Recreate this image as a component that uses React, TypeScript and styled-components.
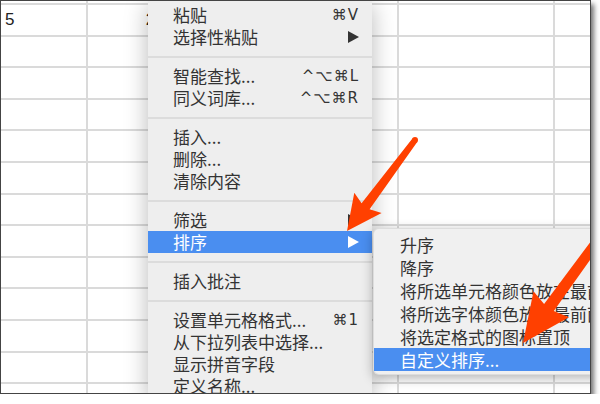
import React from "react";
import styled, { createGlobalStyle } from "styled-components";

const GlobalStyle = createGlobalStyle`
  html, body {
    margin: 0;
    padding: 0;
    background: #ffffff;
  }
  body {
    font-family: "Noto Sans CJK SC", "DejaVu Sans", sans-serif;
  }
`;

const Frame = styled.div`
  position: relative;
  box-sizing: border-box;
  width: 591px;
  height: 394px;
  border: 1px solid #444;
  overflow: hidden;
  box-shadow: 3px 4px 5px rgba(0, 0, 0, 0.55);
  background: #fff;
`;

const Sheet = styled.div`
  display: grid;
  grid-template-columns: 85px 153.5px 153.5px 153.5px 1fr;
  grid-template-rows: 2px;
  grid-auto-rows: 29.6px;
  gap: 2px;
  height: 100%;
  background: #dadada;
  overflow: hidden;
`;

const Cell = styled.div<{ $align?: "left" | "center" }>`
  background: #fff;
  display: flex;
  align-items: center;
  justify-content: ${(p) => (p.$align === "center" ? "center" : "flex-start")};
  padding-left: ${(p) => (p.$align === "center" ? "0" : "4px")};
  font-family: "Liberation Sans", Arial, sans-serif;
  font-size: 17px;
  line-height: 20px;
  color: #222;
  overflow: hidden;
  white-space: nowrap;
`;

const Menu = styled.div`
  position: absolute;
  top: 0;
  left: 147px;
  width: 224px;
  padding: 3px 0;
  background: #eeeeee;
  box-shadow: 0 4px 22px rgba(0, 0, 0, 0.28);
`;

const Item = styled.div<{ $active?: boolean; $pad?: number; $height?: number }>`
  display: flex;
  align-items: center;
  justify-content: space-between;
  height: ${(p) => p.$height ?? 22}px;
  padding: 0 13px 0 ${(p) => p.$pad ?? 25}px;
  font-size: 17px;
  line-height: 20px;
  color: ${(p) => (p.$active ? "#fff" : "#333")};
  background: ${(p) => (p.$active ? "#4a8ef0" : "transparent")};
  white-space: nowrap;
`;

const Shortcut = styled.span`
  font-family: "DejaVu Sans", sans-serif;
  font-size: 15px;
  letter-spacing: 1px;
`;

const Separator = styled.div`
  height: 17px;
  display: flex;
  align-items: center;
  &::after {
    content: "";
    flex: 1;
    height: 2px;
    background: #dcdcdc;
  }
`;

const SubMenu = styled.div`
  position: absolute;
  top: 227px;
  left: 372px;
  width: 260px;
  padding: 4px 0 3px;
  background: #f0f0f0;
  border: 1px solid rgba(0, 0, 0, 0.08);
  border-radius: 6px;
  box-shadow: 0 3px 12px rgba(0, 0, 0, 0.3);
`;

const Overlay = styled.svg`
  position: absolute;
  inset: 0;
  pointer-events: none;
`;

const Caret = () => (
  <svg width="11" height="12" viewBox="0 0 11 12">
    <polygon points="0,0 11,6 0,12" fill="currentColor" />
  </svg>
);

type P = [number, number];

function arrowPath(tail: P, tip: P, headLen: number, headHalf: number, neckHalf: number, tailHalf: number) {
  const dx = tip[0] - tail[0];
  const dy = tip[1] - tail[1];
  const len = Math.hypot(dx, dy);
  const d: P = [dx / len, dy / len];
  const n: P = [-d[1], d[0]];
  const base: P = [tip[0] - d[0] * headLen, tip[1] - d[1] * headLen];
  const back: P = [base[0] - d[0] * 4, base[1] - d[1] * 4];
  const pt = (p: P, k: number, m = n) => `${(p[0] + m[0] * k).toFixed(1)},${(p[1] + m[1] * k).toFixed(1)}`;
  return [
    pt(tail, tailHalf),
    pt(base, neckHalf),
    pt(back, headHalf),
    `${tip[0]},${tip[1]}`,
    pt(back, -headHalf),
    pt(base, -neckHalf),
    pt(tail, -tailHalf),
  ].join(" ");
}

type Row = { label: string; key?: string; sub?: boolean; active?: boolean } | "sep";

const menuRows: Row[] = [
  { label: "粘贴", key: "⌘V" },
  { label: "选择性粘贴", sub: true },
  "sep",
  { label: "智能查找...", key: "^⌥⌘L" },
  { label: "同义词库...", key: "^⌥⌘R" },
  "sep",
  { label: "插入..." },
  { label: "删除..." },
  { label: "清除内容" },
  "sep",
  { label: "筛选", sub: true },
  { label: "排序", sub: true, active: true },
  "sep",
  { label: "插入批注" },
  "sep",
  { label: "设置单元格格式...", key: "⌘1" },
  { label: "从下拉列表中选择..." },
  { label: "显示拼音字段" },
  { label: "定义名称..." },
];

const sortRows = [
  "升序",
  "降序",
  "将所选单元格颜色放在最前面",
  "将所选字体颜色放在最前面",
  "将选定格式的图标置顶",
  "自定义排序...",
];

const cellText: Record<string, { text: string; align?: "left" | "center" }> = {
  "1-0": { text: "5" },
  "1-1": { text: "2019", align: "center" },
};

export default function App() {
  const cells = [];
  for (let r = 0; r < 14; r++) {
    for (let c = 0; c < 5; c++) {
      const v = cellText[`${r}-${c}`];
      cells.push(
        <Cell key={`${r}-${c}`} $align={v?.align}>
          {v?.text}
        </Cell>
      );
    }
  }

  return (
    <>
      <GlobalStyle />
      <Frame>
        <Sheet>{cells}</Sheet>

        <Menu>
          {menuRows.map((row, i) =>
            row === "sep" ? (
              <Separator key={i} />
            ) : (
              <Item key={i} $active={row.active}>
                <span>{row.label}</span>
                {row.key && <Shortcut>{row.key}</Shortcut>}
                {row.sub && <Caret />}
              </Item>
            )
          )}
        </Menu>

        <SubMenu>
          {sortRows.map((label, i) => (
            <Item key={label} $height={23} $pad={26} $active={i === sortRows.length - 1}>
              <span>{label}</span>
            </Item>
          ))}
        </SubMenu>

        <Overlay width="591" height="394">
          <polygon points={arrowPath([414, 139], [346, 230], 31, 17, 5, 3)} fill="#ff4000" />
          <circle cx="414" cy="139" r="3" fill="#ff4000" />
          <polygon points={arrowPath([640, 180], [522, 342], 44, 22, 6, 4)} fill="#ff4000" />
        </Overlay>
      </Frame>
    </>
  );
}
